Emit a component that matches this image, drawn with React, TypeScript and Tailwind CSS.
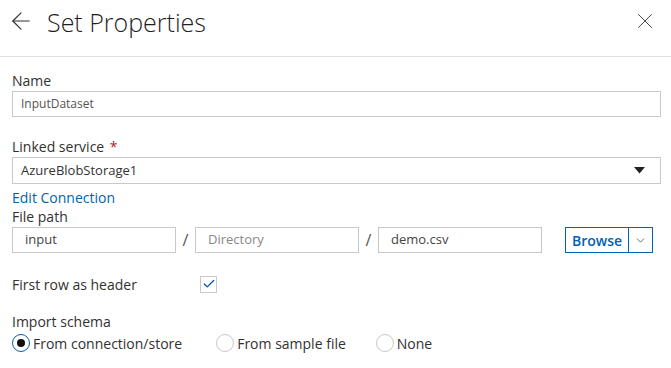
import { ArrowLeft, X, ChevronDown, Check } from "lucide-react";

export default function App() {
  return (
    <div className="w-[671px] h-[368px] bg-white text-[#323130] overflow-hidden" style={{ fontFamily: '"Open Sans", "Noto Sans", sans-serif' }}>
      <div className="h-[57px] flex items-start border-b border-[#e1e1e1] pl-[7px] pr-[13px] pt-[7px]">
        <ArrowLeft className="w-[28px] h-[28px] text-[#323130]" strokeWidth={1} />
        <h1 className="ml-[12px] text-[25px] font-light leading-[30px] text-[#1f1f1f]">Set Properties</h1>
        <X className="ml-auto mt-[1px] w-[26px] h-[26px] text-[#444]" strokeWidth={0.9} />
      </div>

      <div className="px-[12px] pr-[10px] pt-[15px]">
        <div className="text-[14px] leading-[18px]">Name</div>
        <div className="mt-[1px] h-[26px] border border-[#c8c8c8] flex items-center px-[8px] text-[12px] text-[#555]">InputDataset</div>

        <div className="mt-[21px] text-[14px] leading-[18px]">
          Linked service <span className="text-[#a4262c] ml-[2px]">*</span>
        </div>
        <div className="mt-[1px] h-[27px] border border-[#c8c8c8] flex items-center px-[8px] text-[13px] text-[#333]">
          <span>AzureBlobStorage1</span>
          <svg className="ml-auto mr-[7px]" width="11" height="7" viewBox="0 0 11 7">
            <path d="M0 0 H11 L5.5 6.5 Z" fill="#222" />
          </svg>
        </div>

        <div className="mt-[5px] text-[14px] leading-[18px] text-[#0063b1]">Edit Connection</div>
        <div className="mt-[1px] text-[14px] leading-[18px]">File path</div>

        <div className="mt-[1px] flex items-center h-[26px] text-[13px]">
          <div className="w-[164px] h-full border border-[#c8c8c8] flex items-center px-[12px] text-[#444]">input</div>
          <span className="w-[19px] text-center text-[16px] text-[#555]">/</span>
          <div className="w-[164px] h-full border border-[#c8c8c8] flex items-center px-[12px] text-[#888]">Directory</div>
          <span className="w-[19px] text-center text-[16px] text-[#555]">/</span>
          <div className="w-[164px] h-full border border-[#c8c8c8] flex items-center px-[12px] text-[#444]">demo.csv</div>
          <div className="ml-[23px] w-[88px] h-full flex border border-[#0063b1] text-[#0063b1]">
            <span className="w-[62px] flex items-center justify-center text-[14px] font-semibold">Browse</span>
            <span className="flex-1 border-l border-[#0063b1] flex items-center justify-center">
              <ChevronDown className="w-[13px] h-[13px] text-[#333]" strokeWidth={1.3} />
            </span>
          </div>
        </div>

        <div className="mt-[22px] flex items-center h-[18px]">
          <span className="text-[14px] w-[188px]">First row as header</span>
          <span className="w-[17px] h-[17px] border border-[#c8c8c8] flex items-center justify-center">
            <Check className="w-[14px] h-[14px] text-[#0050b0]" strokeWidth={2.2} />
          </span>
        </div>

        <div className="mt-[20px] text-[14px] leading-[18px]">Import schema</div>
        <div className="mt-[3px] flex items-center text-[14px] h-[18px]">
          <span className="w-[18px] h-[18px] rounded-full border border-[#0063b1] flex items-center justify-center">
            <span className="w-[8px] h-[8px] rounded-full bg-[#111]" />
          </span>
          <span className="ml-[3px]">From connection/store</span>
          <span className="ml-[34px] w-[18px] h-[18px] rounded-full border border-[#c8c8c8]" />
          <span className="ml-[3px]">From sample file</span>
          <span className="ml-[30px] w-[18px] h-[18px] rounded-full border border-[#c8c8c8]" />
          <span className="ml-[3px]">None</span>
        </div>
      </div>
    </div>
  );
}
